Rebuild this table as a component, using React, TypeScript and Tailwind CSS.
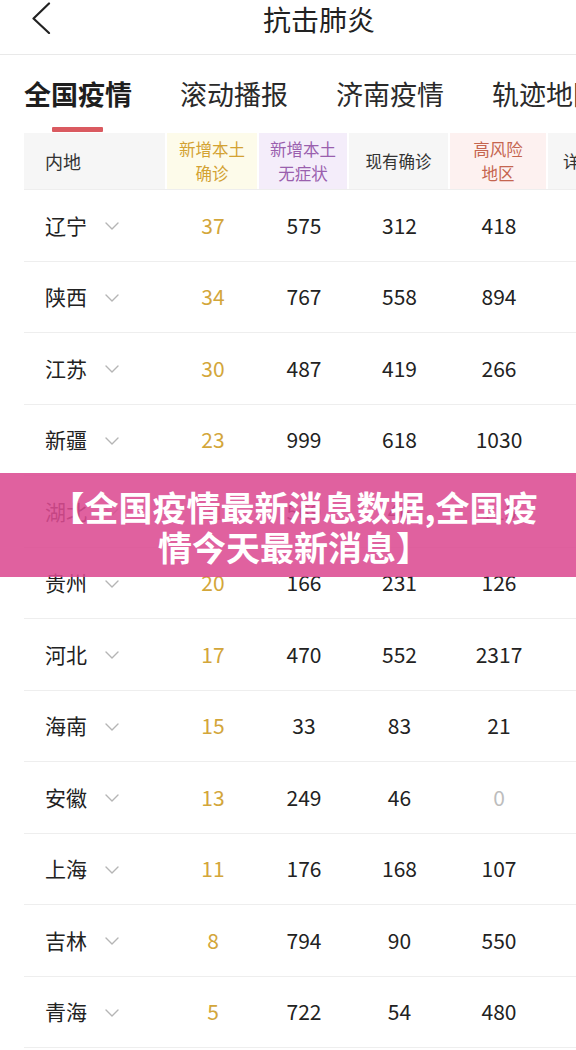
import React from "react";

type Row = { name: string; a: string; b: string; c: string; d: string; dGray?: boolean };

const rows: Row[] = [
  { name: "辽宁", a: "37", b: "575", c: "312", d: "418" },
  { name: "陕西", a: "34", b: "767", c: "558", d: "894" },
  { name: "江苏", a: "30", b: "487", c: "419", d: "266" },
  { name: "新疆", a: "23", b: "999", c: "618", d: "1030" },
  { name: "湖北", a: "21", b: "569", c: "46", d: "115" },
  { name: "贵州", a: "20", b: "166", c: "231", d: "126" },
  { name: "河北", a: "17", b: "470", c: "552", d: "2317" },
  { name: "海南", a: "15", b: "33", c: "83", d: "21" },
  { name: "安徽", a: "13", b: "249", c: "46", d: "0", dGray: true },
  { name: "上海", a: "11", b: "176", c: "168", d: "107" },
  { name: "吉林", a: "8", b: "794", c: "90", d: "550" },
  { name: "青海", a: "5", b: "722", c: "54", d: "480" },
];

function Chevron() {
  return (
    <svg width="14" height="8" viewBox="0 0 14 8" className="ml-[18px] mt-[2px] shrink-0">
      <path d="M1 1 L7 7 L13 1" fill="none" stroke="#b5b5b5" strokeWidth="1.4" strokeLinecap="round" strokeLinejoin="round" />
    </svg>
  );
}

export default function App() {
  return (
    <div className="relative w-[576px] h-[1050px] overflow-hidden bg-white font-['Noto_Sans_CJK_SC',sans-serif] text-[#222]">
      {/* Top bar */}
      <div className="flex items-start h-[55px] border-b border-[#e9e9e9]">
        <svg width="22" height="32" viewBox="0 0 22 32" className="ml-[30px] mt-[2px] shrink-0">
          <path d="M19 1.5 L3.5 16.5 L19 31" fill="none" stroke="#222" strokeWidth="2.2" strokeLinecap="round" strokeLinejoin="round" />
        </svg>
        <div className="ml-[211px] text-[28px] leading-[38px] text-[#222] whitespace-nowrap">抗击肺炎</div>
      </div>

      {/* Tabs */}
      <div className="flex gap-[48px] px-[24px] pt-[21px] whitespace-nowrap">
        <div className="shrink-0 text-[27px] leading-[36px] font-bold text-[#1e1e1e]">全国疫情</div>
        <div className="shrink-0 text-[27px] leading-[36px] text-[#2a2a2a]">滚动播报</div>
        <div className="shrink-0 text-[27px] leading-[36px] text-[#2a2a2a]">济南疫情</div>
        <div className="shrink-0 text-[27px] leading-[36px] text-[#2a2a2a]">轨迹地图</div>
      </div>
      <div className="ml-[52px] mt-[15px] w-[51px] h-[5px] rounded-[1px] bg-[#da5a60]" />

      {/* Table header */}
      <div className="ml-[24px] mt-[1px] flex gap-[2px] h-[57px] border-b border-[#eeeeee] whitespace-nowrap">
        <div className="w-[141px] shrink-0 bg-[#f6f6f6] flex items-center pl-[21px] text-[18px] text-[#333]">内地</div>
        <div className="w-[90px] shrink-0 bg-[#fdfbea] flex flex-col items-center justify-center text-[16.5px] leading-[24px] text-[#d3a233]">
          <span>新增本土</span>
          <span>确诊</span>
        </div>
        <div className="w-[88px] shrink-0 bg-[#f4edfa] flex flex-col items-center justify-center text-[16.5px] leading-[24px] text-[#9a5fae]">
          <span>新增本土</span>
          <span>无症状</span>
        </div>
        <div className="w-[99px] shrink-0 bg-[#f6f6f6] flex items-center justify-center text-[16.5px] text-[#333]">现有确诊</div>
        <div className="w-[96px] shrink-0 bg-[#fdf1f0] flex flex-col items-center justify-center text-[16.5px] leading-[24px] text-[#c5654f]">
          <span>高风险</span>
          <span>地区</span>
        </div>
        <div className="flex-1 min-w-0 overflow-hidden bg-[#f6f6f6] flex items-center pl-[15px] text-[17px] text-[#333]">详情</div>
      </div>

      {/* Rows */}
      <div>
        {rows.map((r) => (
          <div key={r.name} className="ml-[24px] flex items-center h-[71.5px] border-b border-[#eeeeee] text-[21px]">
            <div className="w-[143px] shrink-0 flex items-center pl-[21px]">
              <span className="text-[21px] text-[#222]">{r.name}</span>
              <Chevron />
            </div>
            <div className="w-[92px] shrink-0 text-center text-[#d3a63a]">{r.a}</div>
            <div className="w-[90px] shrink-0 text-center">{r.b}</div>
            <div className="w-[101px] shrink-0 text-center">{r.c}</div>
            <div className={`w-[98px] shrink-0 text-center ${r.dGray ? "text-[#bdbdbd]" : ""}`}>{r.d}</div>
          </div>
        ))}
      </div>

      {/* Banner overlay */}
      <div className="absolute left-0 top-[473px] w-[576px] h-[104px] bg-[#dc4b92]/[0.88] pt-[14px] pl-[12px] text-center text-white font-bold text-[34px] leading-[40px] whitespace-nowrap">
        【全国疫情最新消息数据,全国疫
        <br />
        情今天最新消息】
      </div>
    </div>
  );
}
